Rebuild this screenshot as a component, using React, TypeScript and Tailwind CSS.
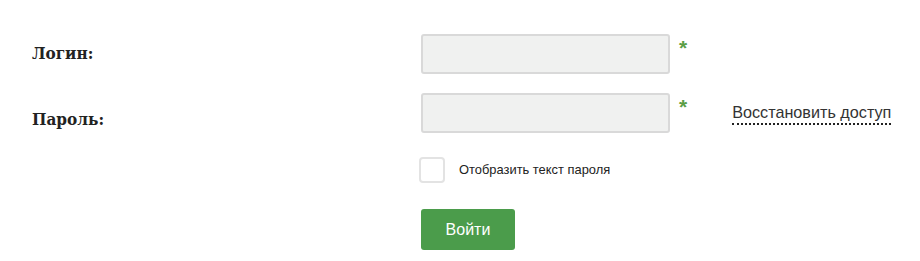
const labelFont = { fontFamily: '"DejaVu Serif Condensed", "DejaVu Serif", serif' };

const App = () => {
  return (
    <div
      className="min-h-screen bg-white pl-8 pt-[34px] text-[#222]"
      style={{ fontFamily: '"Liberation Sans", Arial, sans-serif' }}
    >
      {/* Login */}
      <div className="flex items-center">
        <label
          className="w-[389px] text-[17px] font-bold text-[#222]"
          style={labelFont}
        >
          Логин:
        </label>
        <input
          type="text"
          className="h-10 w-[249px] rounded-[3px] border-2 border-[#d9d9d9] bg-[#f0f1f0] px-2 outline-none"
        />
        <span className="ml-[9px] self-start pt-[3px] text-[21px] font-bold leading-none text-[#5a9e45]">
          *
        </span>
      </div>

      {/* Password */}
      <div className="mt-[19px] flex items-center">
        <label
          className="w-[389px] pt-[14px] text-[17px] font-bold text-[#222]"
          style={labelFont}
        >
          Пароль:
        </label>
        <input
          type="password"
          className="h-10 w-[249px] rounded-[3px] border-2 border-[#d9d9d9] bg-[#f0f1f0] px-2 outline-none"
        />
        <span className="ml-[9px] self-start pt-[3px] text-[21px] font-bold leading-none text-[#5a9e45]">
          *
        </span>
        <a
          href="#"
          className="ml-[45px] self-start mt-[9px] border-b-2 border-dotted border-[#222] pb-[1px] text-[16.2px] leading-[20px] text-[#333]"
        >
          Восстановить доступ
        </a>
      </div>

      {/* Show password */}
      <div className="ml-[387px] mt-[24px] flex items-center">
        <input
          type="checkbox"
          className="h-[26px] w-[26px] appearance-none rounded-[4px] border-2 border-[#e3e3e3] bg-white"
        />
        <span className="ml-[14px] text-[12.9px] text-[#222]">
          Отобразить текст пароля
        </span>
      </div>

      {/* Submit */}
      <div className="ml-[389px] mt-[26px]">
        <button className="h-[41px] w-[94px] rounded-[3px] bg-[#4b9c4b] text-[16px] text-white">
          Войти
        </button>
      </div>
    </div>
  );
};

export default App;
